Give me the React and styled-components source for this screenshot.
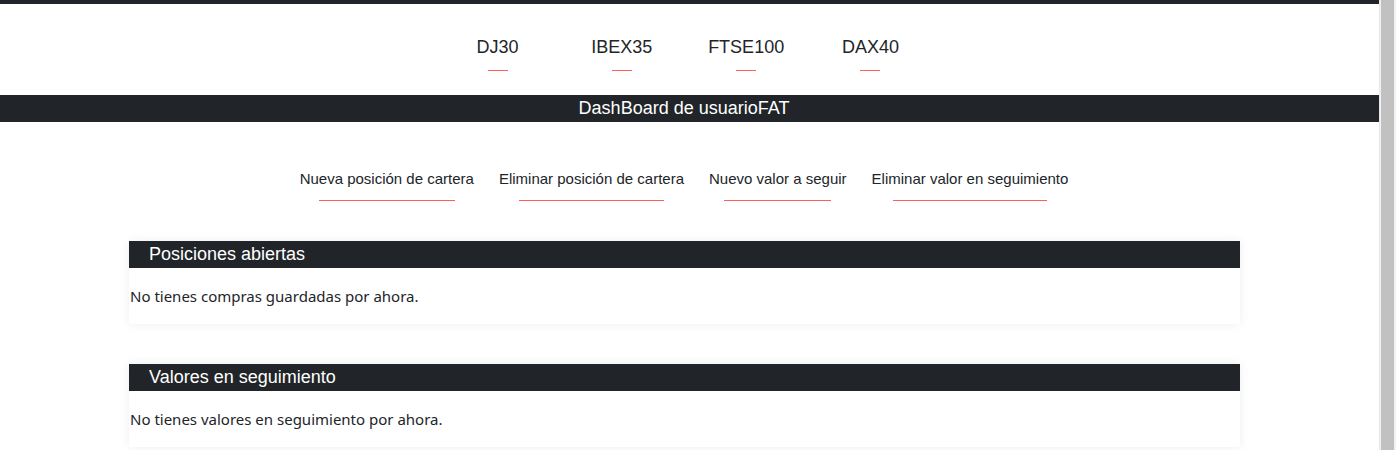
import styled, { createGlobalStyle } from 'styled-components';

const GlobalStyle = createGlobalStyle`
  html, body {
    margin: 0;
    padding: 0;
    background: #fff;
    overflow: hidden;
  }
  body {
    font-family: "Noto Sans", "Open Sans", sans-serif;
    color: #212529;
  }
`;

const Window = styled.div`
  display: flex;
  height: 450px;
  overflow: hidden;
`;

const Page = styled.div`
  flex: 1;
  min-width: 0;
  border-top: 4px solid #212529;
`;

const ScrollTrack = styled.div`
  width: 17px;
  flex-shrink: 0;
  background: #f1f1f1;
  border-left: 1px solid #e8e8e8;
  box-sizing: border-box;
  padding: 0 2px 0 1px;
  display: flex;
`;

const ScrollThumb = styled.div`
  flex: 1;
  background: #c1c1c1;
`;

const IndexNav = styled.nav`
  display: flex;
  justify-content: center;
  padding: 33px 11px 0 0;
  height: 58px;
`;

const IndexItem = styled.a`
  width: 124.3px;
  display: flex;
  flex-direction: column;
  align-items: center;
  font-family: "Liberation Sans", Arial, sans-serif;
  font-size: 18px;
  line-height: 21px;
  color: #212529;
  text-decoration: none;

  &::after {
    content: '';
    display: block;
    width: 20px;
    height: 1px;
    margin-top: 12px;
    background: #ff5c5c;
  }
`;

const Band = styled.div`
  height: 27px;
  background: #212529;
  color: #fff;
  display: flex;
  align-items: center;
  justify-content: center;
  padding-right: 11px;
  font-family: "Liberation Sans", Arial, sans-serif;
  font-size: 18px;
`;

const ActionNav = styled.nav`
  display: flex;
  justify-content: center;
  gap: 25px;
  padding: 48px 11px 0 0;
  height: 71px;
`;

const ActionLink = styled.a`
  display: flex;
  flex-direction: column;
  align-items: center;
  font-family: "Liberation Sans", Arial, sans-serif;
  font-size: 15px;
  line-height: 18px;
  color: #212529;
  text-decoration: none;

  &::after {
    content: '';
    display: block;
    width: 78%;
    height: 1px;
    margin-top: 12px;
    background: #ff5c5c;
  }
`;

const Sections = styled.main`
  display: flex;
  flex-direction: column;
  gap: 40px;
  width: 1111px;
  margin-left: 129px;
`;

const Card = styled.section`
  background: #fff;
  box-shadow: 0 0 10px rgba(0, 0, 0, 0.07);
`;

const CardHeader = styled.h2`
  margin: 0;
  height: 27px;
  padding-left: 20px;
  display: flex;
  align-items: center;
  background: #212529;
  color: #fff;
  font-family: "Liberation Sans", Arial, sans-serif;
  font-weight: 400;
  font-size: 18px;
`;

const CardBody = styled.p`
  margin: 0;
  padding: 16px 0 16px 1px;
  font-size: 15px;
  line-height: 24px;
  color: #212529;
`;

const indices = ['DJ30', 'IBEX35', 'FTSE100', 'DAX40'];
const actions = [
  'Nueva posición de cartera',
  'Eliminar posición de cartera',
  'Nuevo valor a seguir',
  'Eliminar valor en seguimiento',
];

export default function App() {
  return (
    <>
      <GlobalStyle />
      <Window>
        <Page>
          <IndexNav>
            {indices.map((name) => (
              <IndexItem key={name} href="#">{name}</IndexItem>
            ))}
          </IndexNav>
          <Band>DashBoard de usuarioFAT</Band>
          <ActionNav>
            {actions.map((label) => (
              <ActionLink key={label} href="#">{label}</ActionLink>
            ))}
          </ActionNav>
          <Sections>
            <Card>
              <CardHeader>Posiciones abiertas</CardHeader>
              <CardBody>No tienes compras guardadas por ahora.</CardBody>
            </Card>
            <Card>
              <CardHeader>Valores en seguimiento</CardHeader>
              <CardBody>No tienes valores en seguimiento por ahora.</CardBody>
            </Card>
          </Sections>
        </Page>
        <ScrollTrack>
          <ScrollThumb />
        </ScrollTrack>
      </Window>
    </>
  );
}
